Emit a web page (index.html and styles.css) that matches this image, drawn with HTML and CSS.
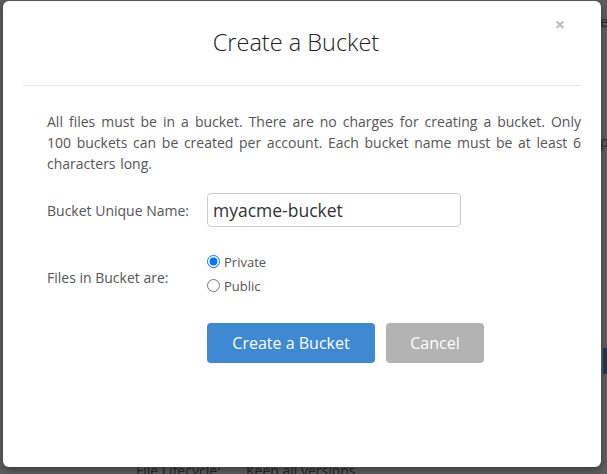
FILE: index.html
```html
<!DOCTYPE html>
<html>
<head>
<meta charset="utf-8">
<link rel="stylesheet" href="styles.css">
</head>
<body>
<div class="page">
  <div class="page-side">
    <div class="side-e">e</div>
    <div class="side-p">p</div>
    <div class="side-btn"></div>
  </div>
  <div class="page-row">
    <span class="row-label">File Lifecycle:</span>
    <span class="row-value">Keep all versions</span>
  </div>
</div>
<div class="modal">
  <div class="modal-header">
    <h2 class="modal-title">Create a Bucket</h2>
    <span class="close">&times;</span>
  </div>
  <div class="modal-body">
    <p class="intro">All files must be in a bucket. There are no charges for creating a bucket. Only 100 buckets can be created per account. Each bucket name must be at least 6 characters long.</p>
    <div class="form-row">
      <label class="label">Bucket Unique Name:</label>
      <input class="input" type="text" value="myacme-bucket">
    </div>
    <div class="form-row radios-row">
      <span class="label label-low">Files in Bucket are:</span>
      <div class="radios">
        <label class="radio"><input type="radio" name="vis" checked> Private</label>
        <label class="radio"><input type="radio" name="vis"> Public</label>
      </div>
    </div>
    <div class="actions">
      <button class="btn btn-primary">Create a Bucket</button>
      <button class="btn btn-cancel">Cancel</button>
    </div>
  </div>
</div>
</body>
</html>
```
FILE: styles.css
```css
* { box-sizing: border-box; }
html, body { margin: 0; padding: 0; }
body {
  width: 607px;
  height: 474px;
  overflow: hidden;
  background: #5f5f5f;
  font-family: "Open Sans", "Liberation Sans", sans-serif;
  position: relative;
}
.page {
  width: 607px;
  height: 474px;
  display: flex;
  flex-direction: column;
  justify-content: flex-end;
}
.page-side {
  position: absolute;
  right: 0;
  top: 0;
  width: 6px;
  height: 474px;
  color: #2a2a2a;
  font-size: 14px;
}
.side-e { position: absolute; left: -1px; top: 12px; }
.side-p { position: absolute; left: -1px; top: 132px; }
.side-btn { position: absolute; left: 2px; top: 348px; width: 6px; height: 26px; background: #223a55; }
.page-row {
  display: flex;
  padding: 0 0 0 136px;
  height: 16px;
  font-size: 14px;
  line-height: 14px;
  color: #262626;
  margin-bottom: -6px;
}
.row-label { width: 110px; }
.modal {
  position: absolute;
  left: 3px;
  top: 1px;
  width: 598px;
  height: 466px;
  background: #fff;
  border-radius: 6px;
  box-shadow: 0 3px 9px rgba(0,0,0,0.4);
  padding: 0 20px;
}
.modal-header {
  position: relative;
  height: 85px;
  border-bottom: 1px solid #e5e5e5;
  display: flex;
  align-items: center;
  justify-content: center;
  padding: 0 12px 0 0;
}
.modal-title {
  margin: 0;
  font-weight: 300;
  font-size: 23.5px;
  color: #222;
  line-height: 30px;
  margin-top: -2px;
}
.close {
  position: absolute;
  right: 16px;
  top: 14px;
  font-size: 18px;
  font-weight: 700;
  color: #bbb;
  line-height: 18px;
}
.modal-body {
  padding: 25px 0 0 24px;
  color: #555;
  font-size: 14px;
}
.intro {
  margin: 0;
  line-height: 21px;
  color: #555;
  text-align: justify;
  word-spacing: 1px;
}
.form-row {
  display: flex;
  align-items: center;
  margin-top: 19px;
}
.label {
  width: 160px;
  color: #555;
  font-size: 14px;
}
.label-low { margin-top: 8px; }
.input {
  width: 254px;
  height: 34px;
  border: 1px solid #ccc;
  border-radius: 4px;
  padding: 0 5px;
  font-family: "Open Sans", "Liberation Sans", sans-serif;
  font-size: 17.5px;
  color: #333;
}
.radios-row { margin-top: 24px; }
.radios {
  display: flex;
  flex-direction: column;
  gap: 3px;
}
.radio {
  display: flex;
  align-items: center;
  font-size: 13px;
  color: #555;
  height: 21px;
}
.radio input {
  margin: 0 4px 0 0;
  width: 13px;
  height: 13px;
}
.actions {
  display: flex;
  gap: 11px;
  margin-top: 27px;
  padding-left: 160px;
}
.btn {
  height: 40px;
  border: none;
  border-radius: 4px;
  font-family: "Open Sans", "Liberation Sans", sans-serif;
  font-size: 16px;
  color: #fff;
  padding: 0;
}
.btn-primary { width: 168px; background: #3f89d3; }
.btn-cancel { width: 98px; background: #b3b3b3; }
```
